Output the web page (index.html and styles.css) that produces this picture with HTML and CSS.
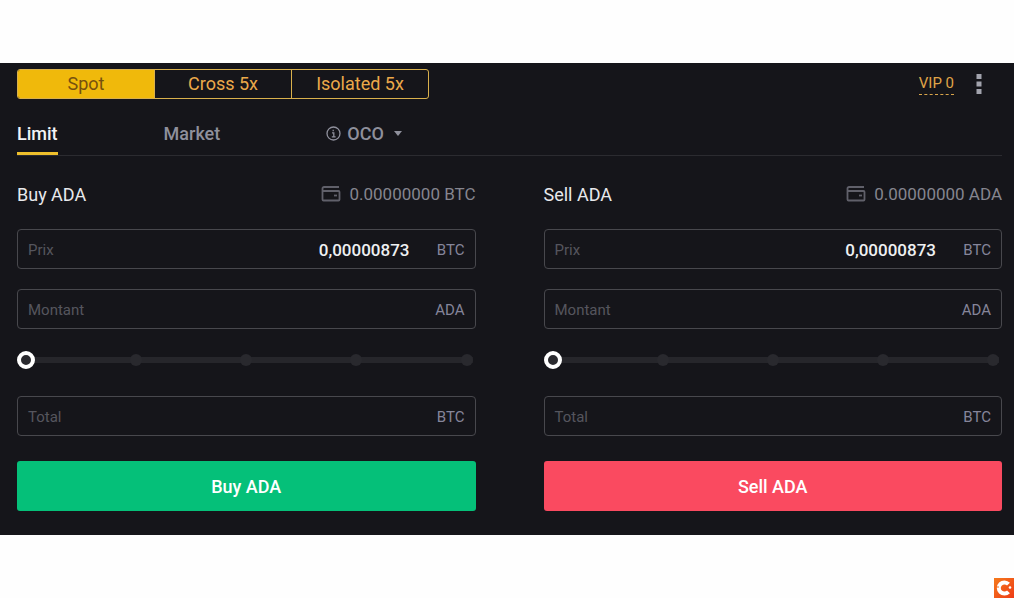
FILE: index.html
```html
<!DOCTYPE html>
<html lang="fr">
<head>
  <meta charset="UTF-8" />
  <meta name="viewport" content="width=device-width, initial-scale=1.0" />
  <title>Trade ADA/BTC</title>
  <link rel="stylesheet" href="styles.css">
</head>
<body>

  <main class="trade-panel">
    <div class="top-bar">
      <div class="modes">
        <button type="button" class="mode active">Spot</button>
        <button type="button" class="mode">Cross 5x</button>
        <button type="button" class="mode">Isolated 5x</button>
      </div>
      <div class="account">
        <a href="#" class="vip">VIP 0</a>
        <button type="button" class="more" aria-label="Menu">
          <svg width="6" height="20" viewBox="0 0 6 20"><path d="M.5 0h5v5h-5zM.5 7.500h5v5h-5zM.5 15h5v5h-5z" fill="currentColor"/></svg>
        </button>
      </div>
    </div>

    <nav class="order-types">
      <button type="button" class="order-type active">Limit</button>
      <button type="button" class="order-type">Market</button>
      <button type="button" class="order-type">
        <svg width="15" height="15" viewBox="0 0 15 15" fill="none" stroke="currentColor" stroke-width="1.3"><circle cx="7.5" cy="7.5" r="6.5"/><path d="M6 6.8h1.8v3.8M5.8 10.8h3.8M7.2 3.7v1.5"/></svg>
        OCO
        <svg class="caret" width="8" height="5" viewBox="0 0 8 5"><path d="M0 0h8L4 5z" fill="currentColor"/></svg>
      </button>
    </nav>

    <div class="forms">
      <!-- Achat -->
      <form class="order-form">
        <div class="form-head">
          <h2>Buy ADA</h2>
          <span class="balance">
            <svg width="20" height="16" viewBox="0 0 20 16" fill="none" stroke="currentColor" stroke-width="1.8"><path d="M18 1H3a1.5 1.5 0 0 0-1.5 1.5V13.500a1 1 0 0 0 1 1H17.500a1 1 0 0 0 1-1V6a1 1 0 0 0-1-1H2"/><path d="M13 9.500h3"/></svg>
            0.00000000 BTC
          </span>
        </div>
        <div class="field">
          <label for="buy-price">Prix</label>
          <input id="buy-price" type="text" value="0,00000873">
          <span class="unit">BTC</span>
        </div>
        <div class="field">
          <label for="buy-amount">Montant</label>
          <input id="buy-amount" type="text">
          <span class="unit">ADA</span>
        </div>
        <div class="slider">
          <div class="ticks"><i></i><i></i><i></i><i></i><i></i></div>
          <input type="range" min="0" max="100" value="0" aria-label="Buy ADA %">
        </div>
        <div class="field">
          <label for="buy-total">Total</label>
          <input id="buy-total" type="text">
          <span class="unit">BTC</span>
        </div>
        <button type="button" class="submit buy">Buy ADA</button>
      </form>

      <!-- Vente -->
      <form class="order-form">
        <div class="form-head">
          <h2>Sell ADA</h2>
          <span class="balance">
            <svg width="20" height="16" viewBox="0 0 20 16" fill="none" stroke="currentColor" stroke-width="1.8"><path d="M18 1H3a1.5 1.5 0 0 0-1.5 1.5V13.500a1 1 0 0 0 1 1H17.500a1 1 0 0 0 1-1V6a1 1 0 0 0-1-1H2"/><path d="M13 9.500h3"/></svg>
            0.00000000 ADA
          </span>
        </div>
        <div class="field">
          <label for="sell-price">Prix</label>
          <input id="sell-price" type="text" value="0,00000873">
          <span class="unit">BTC</span>
        </div>
        <div class="field">
          <label for="sell-amount">Montant</label>
          <input id="sell-amount" type="text">
          <span class="unit">ADA</span>
        </div>
        <div class="slider">
          <div class="ticks"><i></i><i></i><i></i><i></i><i></i></div>
          <input type="range" min="0" max="100" value="0" aria-label="Sell ADA %">
        </div>
        <div class="field">
          <label for="sell-total">Total</label>
          <input id="sell-total" type="text">
          <span class="unit">BTC</span>
        </div>
        <button type="button" class="submit sell">Sell ADA</button>
      </form>
    </div>
  </main>

  <svg class="badge" width="20" height="20" viewBox="0 0 20 20">
    <defs>
      <linearGradient id="orange" x1="0" y1="0" x2="1" y2="1">
        <stop offset="0" stop-color="#f57a1c"/>
        <stop offset="1" stop-color="#ee3b16"/>
      </linearGradient>
    </defs>
    <rect width="20" height="20" fill="url(#orange)"/>
    <path d="M14.500 6.200A5.600 5.600 0 1 0 14.500 13.800" fill="none" stroke="#fff" stroke-width="4"/>
    <path d="M2 9h3" stroke="#f26a1b" stroke-width="1"/>
    <circle cx="16" cy="9.500" r="1.300" fill="#fff"/>
  </svg>

</body>
</html>
```
FILE: styles.css
```css
* {
  box-sizing: border-box;
}

body {
  margin: 0;
  padding-top: 63px;
  background-color: #fefefe;
  font-family: Roboto, sans-serif;
}

button,
input {
  font-family: inherit;
}

button {
  padding: 0;
  border: none;
  background: none;
  cursor: pointer;
}

.trade-panel {
  padding: 6px 12px 24px 17px;
  background-color: #15151a;
}

.top-bar {
  display: flex;
  justify-content: space-between;
  align-items: center;
}

.modes {
  display: flex;
  width: 412px;
  height: 30px;
  border: 1px solid #d9b04c;
  border-radius: 3px;
  overflow: hidden;
}

.mode {
  flex: 1;
  padding-bottom: 1px;
  font-size: 18px;
  color: #eba94a;
}

.mode + .mode {
  border-left: 1px solid #d9b04c;
}

.mode.active {
  background-color: #f0b90b;
  color: #76500f;
}

.account {
  display: flex;
  align-items: center;
  gap: 22px;
  padding-right: 20px;
}

.vip {
  padding-bottom: 1px;
  border-bottom: 1px dashed #d9a54a;
  font-size: 15px;
  line-height: 20px;
  color: #e0a548;
  text-decoration: none;
}

.more {
  display: flex;
  color: #a2a3ad;
}

.order-types {
  display: flex;
  gap: 106px;
  height: 57px;
  border-bottom: 1px solid #2b2b30;
}

.order-type {
  display: flex;
  align-items: center;
  gap: 6px;
  padding-top: 16px;
  border-bottom: 3px solid transparent;
  font-size: 18px;
  font-weight: 500;
  color: #8f909c;
}

.order-type.active {
  border-color: #eebf2c;
  color: #f2f3f5;
}

.caret {
  margin-left: 4px;
}

.forms {
  display: grid;
  grid-template-columns: 1fr 1fr;
  gap: 68px;
  padding-top: 26px;
}

.order-form {
  display: flex;
  flex-direction: column;
  gap: 20px;
}

.form-head {
  display: flex;
  justify-content: space-between;
  align-items: center;
  height: 27px;
  padding-bottom: 3px;
}

.form-head h2 {
  margin: 0;
  font-size: 18px;
  font-weight: 400;
  color: #e8e9ec;
}

.balance {
  display: flex;
  align-items: center;
  gap: 8px;
  font-size: 17px;
  color: #85858f;
}

.balance svg {
  color: #60606a;
}

.field {
  display: flex;
  align-items: center;
  height: 40px;
  padding: 2px 10px 0;
  border: 1px solid #48484d;
  border-radius: 4px;
}

.field label {
  font-size: 15px;
  color: #55555e;
}

.field input {
  flex: 1;
  min-width: 0;
  padding: 0;
  border: none;
  outline: none;
  background: none;
  font-size: 17px;
  font-weight: 500;
  text-align: right;
  color: #eef0f2;
}

.unit {
  width: 55px;
  font-size: 15px;
  text-align: right;
  color: #85859a;
}

.slider {
  position: relative;
  height: 27px;
}

.ticks {
  position: absolute;
  top: 5px;
  left: 3px;
  right: 3px;
  display: flex;
  justify-content: space-between;
  background: linear-gradient(#26262b, #26262b) center / 100% 6px no-repeat;
}

.ticks i {
  width: 12px;
  height: 12px;
  border-radius: 50%;
  background-color: #29292e;
}

.slider input {
  position: relative;
  display: block;
  width: 100%;
  height: 22px;
  margin: 0;
  background: none;
  appearance: none;
}

.slider input::-webkit-slider-thumb {
  width: 18px;
  height: 18px;
  border: 4px solid #fff;
  border-radius: 50%;
  background-color: #2a2a2f;
  appearance: none;
}

.submit {
  height: 50px;
  margin-top: 5px;
  border-radius: 3px;
  font-size: 18px;
  font-weight: 500;
  color: #fff;
}

.submit.buy {
  background-color: #05c079;
}

.submit.sell {
  background-color: #fa4a60;
}

.badge {
  position: fixed;
  right: 0;
  bottom: 0;
}
```
